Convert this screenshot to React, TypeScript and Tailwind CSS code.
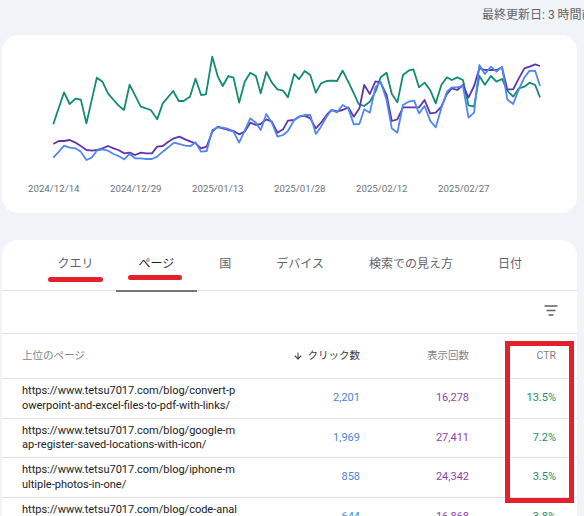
import { ArrowDown } from 'lucide-react';

// chart points traced in a 2.685x (horizontal) / 3x (vertical) space
const green = [[143,373],[172,277],[187,312],[203,296],[217,299],[232,370],[260,233],[275,245],[290,280],[305,300],[318,316],[333,330],[348,254],[378,320],[405,330],[422,358],[437,310],[465,273],[480,303],[493,303],[510,290],[525,236],[540,285],[553,283],[570,170],[585,230],[598,258],[613,228],[627,233],[642,308],[657,245],[672,218],[687,228],[700,280],[715,216],[730,248],[745,268],[760,272],[773,292],[790,222],[803,238],[818,213],[833,225],[848,278],[862,250],[877,243],[890,242],[905,243],[920,212],[935,245],[950,280],[963,312],[978,318],[993,305],[1008,275],[1022,232],[1038,218],[1052,282],[1067,307],[1082,225],[1097,212],[1110,208],[1125,262],[1140,248],[1155,270],[1170,310],[1185,255],[1200,232],[1213,240],[1228,232],[1243,240],[1258,316],[1273,320],[1287,228],[1302,254],[1318,228],[1333,245],[1348,237],[1362,272],[1378,290],[1393,265],[1408,260],[1422,248],[1437,255],[1450,292]];

const purple = [[143,432],[158,423],[172,423],[187,420],[203,428],[217,438],[232,450],[247,452],[260,450],[275,445],[290,438],[305,445],[318,450],[333,460],[348,458],[363,465],[378,458],[393,460],[408,460],[422,440],[437,438],[452,425],[467,415],[482,410],[497,418],[512,425],[525,430],[540,445],[555,440],[570,395],[585,380],[598,385],[613,390],[627,393],[642,403],[657,395],[672,368],[687,375],[700,372],[715,358],[730,365],[745,398],[760,388],[773,362],[790,360],[803,350],[818,347],[833,355],[848,385],[862,368],[877,345],[890,330],[905,334],[920,330],[935,322],[950,350],[965,325],[978,255],[993,282],[1008,244],[1022,248],[1038,285],[1052,363],[1067,358],[1082,322],[1097,322],[1112,322],[1125,322],[1140,300],[1155,340],[1170,338],[1185,320],[1200,282],[1213,265],[1228,270],[1243,255],[1258,293],[1273,258],[1287,205],[1302,210],[1318,210],[1333,210],[1348,203],[1362,268],[1378,268],[1393,235],[1408,205],[1422,200],[1437,193],[1450,198]];

const blue = [[143,473],[158,455],[172,437],[187,443],[203,445],[217,455],[232,480],[247,472],[260,452],[275,448],[290,452],[305,462],[318,468],[333,478],[348,462],[363,475],[378,475],[393,477],[408,477],[422,470],[437,455],[452,442],[467,428],[482,432],[497,437],[512,438],[525,427],[540,455],[555,453],[570,390],[585,382],[598,383],[613,387],[627,395],[642,428],[657,392],[672,355],[687,368],[700,390],[715,342],[730,368],[745,410],[760,405],[773,393],[790,360],[803,350],[818,345],[833,345],[848,402],[862,380],[877,350],[890,330],[905,337],[920,315],[935,325],[950,373],[965,372],[978,328],[993,338],[1008,262],[1022,245],[1038,300],[1052,385],[1067,398],[1082,315],[1097,305],[1112,302],[1125,340],[1140,318],[1155,362],[1170,382],[1185,325],[1200,275],[1213,262],[1228,262],[1243,258],[1258,353],[1273,338],[1287,195],[1302,222],[1318,200],[1333,215],[1348,200],[1362,298],[1378,312],[1393,268],[1408,232],[1422,212],[1437,213],[1450,258]];

const pts = (a: number[][]) => a.map((p) => p.join(',')).join(' ');

const dates = ['2024/12/14', '2024/12/29', '2025/01/13', '2025/01/28', '2025/02/12', '2025/02/27'];
const tabs = ['クエリ', 'ページ', '国', 'デバイス', '検索での見え方', '日付'];

const rows = [
  { url: ['https://www.tetsu7017.com/blog/convert-p', 'owerpoint-and-excel-files-to-pdf-with-links/'], clicks: '2,201', imp: '16,278', ctr: '13.5%', h: 'h-[40px]' },
  { url: ['https://www.tetsu7017.com/blog/google-m', 'ap-register-saved-locations-with-icon/'], clicks: '1,969', imp: '27,411', ctr: '7.2%', h: 'h-[39px]' },
  { url: ['https://www.tetsu7017.com/blog/iphone-m', 'ultiple-photos-in-one/'], clicks: '858', imp: '24,342', ctr: '3.5%', h: 'h-[40px]' },
  { url: ['https://www.tetsu7017.com/blog/code-anal', 'ysis-tools/'], clicks: '644', imp: '16,868', ctr: '3.8%', h: 'h-[40px]' },
];

function Chart() {
  return (
    <svg width={575} height={130} viewBox="5.37 150 1543.9 390" preserveAspectRatio="none" className="block">
      {[
        [green, '#138a72'],
        [purple, '#5e35b1'],
        [blue, '#5088ee'],
      ].map(([d, c], i) => (
        <polyline
          key={i}
          points={pts(d as number[][])}
          fill="none"
          stroke={c as string}
          strokeWidth={1.8}
          strokeLinejoin="round"
          vectorEffect="non-scaling-stroke"
        />
      ))}
    </svg>
  );
}

function FilterIcon() {
  return (
    <svg width="14" height="11" viewBox="0 0 14 11" className="block">
      <path d="M0.5 1h13M2.5 5.5h9M4.5 10h5" stroke="#5f6368" strokeWidth="1.3" />
    </svg>
  );
}

export default function App() {
  return (
    <div className="relative h-[516px] w-[584px] overflow-hidden bg-[#f0f4f9] font-[Roboto,'Noto_Sans_CJK_JP',sans-serif]">
      <div className="h-[35px] whitespace-nowrap pl-[482px] pt-[6px] text-[12px] leading-[18px] text-[#5f6368]">
        最終更新日: 3 時間前
      </div>

      {/* performance chart */}
      <div className="ml-[2px] h-[178px] w-[575px] rounded-[16px] bg-white pt-[15px]">
        <Chart />
        <div className="flex pl-[26px] pt-[1px] text-[9.7px] leading-[16px] text-[#6f7378]">
          {dates.map((d) => (
            <span key={d} className="w-[82px] whitespace-nowrap">
              {d}
            </span>
          ))}
        </div>
      </div>

      {/* table card */}
      <div className="relative ml-[2px] mt-[27px] w-[575px] rounded-t-[16px] bg-white">
        <div className="flex h-[51px] border-b border-[#e0e3e7] pl-[33px]">
          {tabs.map((t, i) => (
            <div
              key={t}
              className={`relative flex h-[51px] items-center px-[22.5px] pb-[3px] text-[12px] ${
                i === 1 ? 'text-[#1f1f1f]' : 'text-[#5f6368]'
              }`}
            >
              {t}
              {i === 1 && <div className="absolute inset-x-0 bottom-[-1px] h-[2px] bg-[#747775]" />}
            </div>
          ))}
        </div>
        {/* annotation underlines */}
        <div className="absolute left-[46px] top-[37px] h-[5px] w-[55px] rounded-full bg-[#e3202b]" />
        <div className="absolute left-[126px] top-[35px] h-[5px] w-[54px] rounded-full bg-[#e3202b]" />

        <div className="flex h-[43px] items-center justify-end border-b border-[#e0e3e7] pb-[4px] pr-[19px]">
          <FilterIcon />
        </div>

        <div className="grid h-[45px] grid-cols-[228px_110px_109px_87px] items-center border-b border-[#e0e3e7] pl-[20px] pr-[21px] text-[10.5px] text-[#80868b]">
          <span>上位のページ</span>
          <span className="flex items-center justify-end gap-[5px] text-[#3c4043]">
            <ArrowDown size={10} strokeWidth={2.6} />
            クリック数
          </span>
          <span className="text-right">表示回数</span>
          <span className="text-right">CTR</span>
        </div>

        {rows.map((r) => (
          <div
            key={r.clicks}
            className={`grid ${r.h} grid-cols-[228px_110px_109px_87px] items-center border-b border-[#e0e3e7] pl-[20px] pr-[21px] text-[11px]`}
          >
            <div className="whitespace-nowrap leading-[14.5px] text-[#202124]">
              <div>{r.url[0]}</div>
              <div>{r.url[1]}</div>
            </div>
            <span className="text-right text-[#4a86d8]">{r.clicks}</span>
            <span className="text-right text-[#8e44ad]">{r.imp}</span>
            <span className="text-right text-[#1e8e6e]">{r.ctr}</span>
          </div>
        ))}
      </div>

      {/* CTR highlight box */}
      <div className="absolute left-[505px] top-[341px] h-[162px] w-[69px] border-[5px] border-[#e3202b]" />
    </div>
  );
}
